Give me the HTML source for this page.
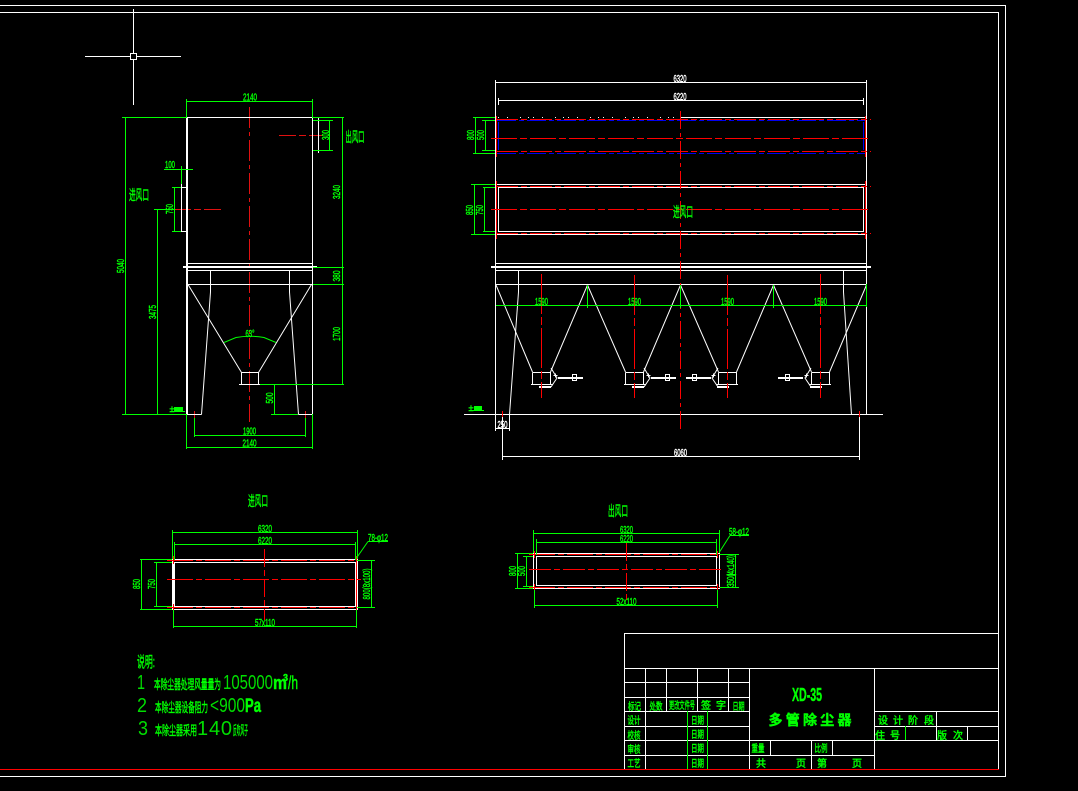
<!DOCTYPE html>
<html lang="zh">
<head>
<meta charset="utf-8">
<title>XD-35 多管除尘器</title>
<style>
html,body{margin:0;padding:0;background:#000;width:1078px;height:791px;overflow:hidden}
svg{display:block}
text{font-family:"Liberation Sans","Noto Sans CJK SC",sans-serif;fill:#0f0;text-anchor:middle;stroke:#0f0;stroke-width:.45}
.w{fill:#fff;stroke:#fff}
.c{font-weight:700}
.s{text-anchor:start}
.t{stroke-width:0;fill:#0d0;text-anchor:start}
</style>
</head>
<body>
<svg width="1078" height="791" viewBox="0 0 1078 791" xmlns="http://www.w3.org/2000/svg">
<rect width="1078" height="791" fill="#000"/>

<!-- frame -->
<g fill="none" stroke="#fff" stroke-width="1" shape-rendering="crispEdges">
<path d="M0 5.5H1005.5V776.5H0M0 12.5H998.5V769.5"/>
<!-- crosshair -->
<path d="M133.5 9V53M133.5 60V105M85 56.5H130M137 56.5H181M130.5 53.5h6v6h-6z"/>
</g>
<path d="M0 769.5H999" stroke="#f00" stroke-width="1" shape-rendering="crispEdges" fill="none"/>

<!-- LEFT VIEW: red -->
<g fill="none" stroke="#e01010" stroke-width="1" shape-rendering="crispEdges">
<path d="M249.5 107V422" stroke-dasharray="21 4 4 4"/>
<path d="M279 135.5H323" stroke-dasharray="17 3 7 3"/>
<path d="M174 209.5H221" stroke-dasharray="17 3 7 3"/>
<path d="M194.5 411V418M305.5 411V418"/>
</g>
<!-- LEFT VIEW: white -->
<g fill="none" stroke="#fff" stroke-width="1">
<g shape-rendering="crispEdges">
<path d="M186.5 117.5H312.5V414.5H298.5M187.5 117.5V414.5H201.5M186.5 117.5V414.5"/>
<path d="M312.5 120.5H318.5M312.5 150.5H318.5M318.5 118V153"/>
<path d="M181.5 184V232M181.5 187.5H187M181.5 231.5H187"/>
<path d="M187 263.5H313M183 266.5H317M183 267.5H317M187 270.5H313M187 284.5H312"/>
<path d="M241.5 372.5H258.5V384.5M241.5 372.5V384.5M239 384.5H260"/>
</g>
<path d="M210.5 270V292L201.5 414.5M289.5 270V292L298.5 414.5"/>
<path d="M188 284.5L241.5 372.5M311.5 284.5L258.5 372.5"/>
</g>
<!-- LEFT VIEW: green -->
<g fill="none" stroke="#0f0" stroke-width="1">
<g shape-rendering="crispEdges">
<path d="M186.5 99V117M312.5 99V117M187 101.5H312"/>
<path d="M122 117.5H187M312 117.5H344M125.5 117V414M342.5 117V384M313 120.5H333M313 150.5H333M329.5 121V150"/>
<path d="M164 169.5H193M181.5 166V184M172 187.5H181M174.5 188V231M172 231.5H181M154 209.5H174M157.5 209V414"/>
<path d="M122 414.5H187M260 384.5H344M274.5 384V414M271 414.5H298M313 267.5H344M313 284.5H344"/>
<path d="M194.5 418V437M305.5 418V437M195 435.5H305M186.5 414V449M312.5 414V449M187 447.5H312"/>
</g>
<path d="M224 342.5L236 337.5Q250 335 264 337.5L276 342.5"/>
</g>
<rect x="174" y="407" width="9" height="4" fill="#0f0"/>
<rect x="170" y="411" width="15" height="1" fill="#0f0"/>

<!-- FRONT VIEW: blue -->
<g fill="none" stroke="#0000ee" stroke-width="1" shape-rendering="crispEdges">
<path d="M497 120.5H866M497 153.5H866" stroke-dasharray="19 3 5 3"/>
<path d="M498.5 122V150M863.5 122V150"/>
</g>
<!-- FRONT VIEW: white -->
<g fill="none" stroke="#fff" stroke-width="1">
<g shape-rendering="crispEdges">
<path d="M495.5 80V431M866.5 80V414.5M495 82.5H867M498.5 98V105M863.5 98V105M498 100.5H864"/>
<path d="M498 117.5H680" stroke-dasharray="1 8 1 12 1 7 1 4"/>
<path d="M680 117.5H866"/>
<path d="M496 184.5H866M496 234.5H866M498.5 187.5H863.5V231.5H498.5ZM496.5 184V235"/>
<path d="M496 263.5H866M491 266.5H871M491 267.5H871M496 270.5H866M495 284.5H867"/>
<path d="M464 414.5H883M502.5 417V460M859.5 417V460M503 456.5H859M496 428.5H509M509.5 414V431"/>
<path d="M532.5 372.5H550.5V384.5M532.5 372.5V384.5M531 384.5H553M539 386.5H551M539 387.5H551"/>
<path d="M625.5 372.5H643.5V384.5M625.5 372.5V384.5M624 384.5H646M632 386.5H644M632 387.5H644"/>
<path d="M718.5 372.5H736.5V384.5M718.5 372.5V384.5M716 384.5H738M717 386.5H729M717 387.5H729"/>
<path d="M811.5 372.5H829.5V384.5M811.5 372.5V384.5M809 384.5H831M810 386.5H822M810 387.5H822"/>
<path d="M558 378H583M651 378H676M686 378H711M778 378H803" stroke-width="2"/>
<path d="M572.5 374.5h4v6h-4zM665.5 374.5h4v6h-4zM692.5 374.5h4v6h-4zM785.5 374.5h4v6h-4z"/>
<path d="M555.5 373.5v4M553.5 375.5h4M648.5 373.5v4M646.5 375.5h4M713.5 373.5v4M711.5 375.5h4M806.5 373.5v4M804.5 375.5h4"/>
</g>
<path d="M496 285L532.5 372M550.5 372L587.5 285L625.5 372M643.5 372L680.5 285L718.5 372M736.5 372L773.5 285L811.5 372M829.5 372L866.5 285"/>
<path d="M518.5 270V292L509.5 414.5M843.5 270V292L851.5 414.5"/>
<path d="M551 368L557 378L551 387M644 368L650 378L644 387M718 368L712 378L718 387M811 368L805 378L811 387"/>
</g>
<!-- FRONT VIEW: red -->
<g fill="none" stroke="#f00" stroke-width="1" shape-rendering="crispEdges">
<path d="M496 119.5H871M496 151.5H871M496 186.5H871M496 233.5H871" stroke-dasharray="22 3 6 3"/>
<path d="M491 138.5H871" stroke-dasharray="26 3 7 3"/>
<path d="M491 209.5H871" stroke-dasharray="26 3 7 3"/>
<path d="M496.5 116V157M865.5 116V157M865.5 181V239M496.5 181V239"/>
<path d="M680.5 111V432" stroke-dasharray="18 4 4 4"/>
<path d="M541.5 274V398M634.5 275V398M727.5 275V398M820.5 274V398" stroke-dasharray="40 3 8 3"/>
<path d="M502.5 411V417M859.5 411V417"/>
</g>
<!-- FRONT VIEW: green -->
<g fill="none" stroke="#0f0" stroke-width="1" shape-rendering="crispEdges">
<path d="M473 117.5H495M473 153.5H495M475.5 118V153M482 120.5H495M482 150.5H495M485.5 121V150"/>
<path d="M471 184.5H495M471 234.5H495M474.5 185V234M483 187.5H495M483 231.5H495M484.5 188V231"/>
<path d="M496 305.5H867M587.5 285V308M680.5 285V308M773.5 285V308M866.5 284V307"/>
</g>
<rect x="474" y="406" width="8" height="4" fill="#0f0"/>
<rect x="469" y="410" width="15" height="1" fill="#0f0"/>

<!-- INLET DETAIL -->
<g fill="none" stroke="#fff" stroke-width="1" shape-rendering="crispEdges">
<path d="M172.5 559.5H357.5V609.5H172.5ZM174.5 562.5H355.5V606.5H174.5ZM173.5 560V609"/>
</g>
<g fill="none" stroke="#f00" stroke-width="1" shape-rendering="crispEdges">
<path d="M167 560.5H361M167 607.5H361" stroke-dasharray="26 3 6 3"/>
<path d="M167 579.5H361" stroke-dasharray="26 3 6 3"/>
<path d="M264.5 549V620" stroke-dasharray="18 3 6 3"/>
<path d="M173.5 556V564M173.5 604V612M356.5 556V612"/>
</g>
<g fill="none" stroke="#0f0" stroke-width="1">
<g shape-rendering="crispEdges">
<path d="M172.5 530V559M357.5 530V559M172 532.5H357M174.5 542V560M355.5 542V560M175 544.5H355"/>
<path d="M140 559.5H172M140 609.5H172M141.5 560V609M154 562.5H172M154 606.5H172M156.5 563V606"/>
<path d="M357 560.5H375M357 607.5H375M371.5 561V607"/>
<path d="M173.5 610V628M356.5 610V628M174 626.5H356M368 541.5H388"/>
</g>
<path d="M356.5 558L368 541.5"/>
</g>

<!-- OUTLET DETAIL -->
<g fill="none" stroke="#fff" stroke-width="1" shape-rendering="crispEdges">
<path d="M533.5 553.5H719.5V588.5H533.5ZM536.5 556.5H716.5V585.5H536.5Z"/>
</g>
<g fill="none" stroke="#f00" stroke-width="1" shape-rendering="crispEdges">
<path d="M529 554.5H724M529 587.5H724" stroke-dasharray="26 3 6 3"/>
<path d="M529 569.5H724" stroke-dasharray="22 3 6 3"/>
<path d="M626.5 543V600" stroke-dasharray="18 3 6 3"/>
<path d="M534.5 551V558M717.5 551V558M534.5 584V590M717.5 584V590"/>
</g>
<g fill="none" stroke="#0f0" stroke-width="1">
<g shape-rendering="crispEdges">
<path d="M533.5 530V553M719.5 530V553M534 533.5H719M536.5 539V555M716.5 539V555M537 542.5H716"/>
<path d="M515 553.5H533M515 588.5H533M517.5 554V588M523 556.5H533M523 586.5H533M526.5 557V586"/>
<path d="M720 554.5H739M720 587.5H739M735.5 555V587M727 574.5H736"/>
<path d="M534.5 590V608M717.5 590V608M535 605.5H717M730 535.5H749"/>
</g>
<path d="M719.5 552L730 535.5"/>
</g>

<!-- TITLE BLOCK -->
<g fill="none" stroke="#fff" stroke-width="1" shape-rendering="crispEdges">
<path d="M624.5 769V633.5H998.5M624.5 668.5H998.5"/>
<path d="M624 682.5H749M624 697.5H749M624 711.5H749M624 726.5H749M624 740.5H998M624 755.5H874"/>
<path d="M645.5 668V769M666.5 668V711M697.5 668V711M728.5 668V711M749.5 668V769"/>
<path d="M770.5 740V755M811.5 740V769M832.5 740V755M874.5 668V769"/>
<path d="M874 711.5H998M874 726.5H998M936.5 711V740M967.5 726V740"/>
</g>
<g fill="none" stroke="#0f0" stroke-width="1" shape-rendering="crispEdges">
<path d="M687.5 711V769M707.5 711V769M905.5 726V740"/>
</g>

<!-- DIMENSION TEXT: left view -->
<text x="250" y="100.5" font-size="10" textLength="14" lengthAdjust="spacingAndGlyphs">2140</text>
<text font-size="10" textLength="10" lengthAdjust="spacingAndGlyphs" x="170" y="168">100</text>
<text transform="translate(330,135) rotate(-90)" font-size="10" textLength="10" lengthAdjust="spacingAndGlyphs" y="-1">300</text>
<text x="355" y="142" font-size="14" textLength="19" lengthAdjust="spacingAndGlyphs">出风口</text>
<text x="139" y="200" font-size="14" textLength="20" lengthAdjust="spacingAndGlyphs">进风口</text>
<text transform="translate(174,209) rotate(-90)" font-size="10" textLength="10" lengthAdjust="spacingAndGlyphs" y="-1">750</text>
<text transform="translate(341,192) rotate(-90)" font-size="10" textLength="14" lengthAdjust="spacingAndGlyphs" y="-1">3240</text>
<text transform="translate(125,266) rotate(-90)" font-size="10" textLength="14" lengthAdjust="spacingAndGlyphs" y="-1">5040</text>
<text transform="translate(157,312) rotate(-90)" font-size="10" textLength="14" lengthAdjust="spacingAndGlyphs" y="-1">3475</text>
<text transform="translate(341,276) rotate(-90)" font-size="10" textLength="11" lengthAdjust="spacingAndGlyphs" y="-1">380</text>
<text transform="translate(341,334) rotate(-90)" font-size="10" textLength="14" lengthAdjust="spacingAndGlyphs" y="-1">1700</text>
<text transform="translate(274,398) rotate(-90)" font-size="10" textLength="11" lengthAdjust="spacingAndGlyphs" y="-1">500</text>
<text x="250" y="337" font-size="10" textLength="9" lengthAdjust="spacingAndGlyphs">63°</text>
<text x="249.5" y="434.5" font-size="10" textLength="13" lengthAdjust="spacingAndGlyphs">1900</text>
<text x="249.5" y="446.5" font-size="10" textLength="14" lengthAdjust="spacingAndGlyphs">2140</text>
<text x="172" y="412" font-size="9" textLength="5" lengthAdjust="spacingAndGlyphs">±</text>

<!-- DIMENSION TEXT: front view -->
<text class="w" x="680" y="82" font-size="10" textLength="13" lengthAdjust="spacingAndGlyphs">6320</text>
<text class="w" x="680" y="100" font-size="10" textLength="13" lengthAdjust="spacingAndGlyphs">6220</text>
<text transform="translate(475,135) rotate(-90)" font-size="10" textLength="10" lengthAdjust="spacingAndGlyphs" y="-1">800</text>
<text transform="translate(485,135) rotate(-90)" font-size="10" textLength="10" lengthAdjust="spacingAndGlyphs" y="-1">500</text>
<text transform="translate(474,210) rotate(-90)" font-size="10" textLength="10" lengthAdjust="spacingAndGlyphs" y="-1">850</text>
<text transform="translate(484,210) rotate(-90)" font-size="10" textLength="10" lengthAdjust="spacingAndGlyphs" y="-1">750</text>
<text x="683" y="217" font-size="14" textLength="20" lengthAdjust="spacingAndGlyphs">进风口</text>
<text x="541.5" y="305" font-size="10" textLength="13" lengthAdjust="spacingAndGlyphs">1590</text>
<text x="634.5" y="305" font-size="10" textLength="13" lengthAdjust="spacingAndGlyphs">1590</text>
<text x="727.5" y="305" font-size="10" textLength="13" lengthAdjust="spacingAndGlyphs">1590</text>
<text x="820.5" y="305" font-size="10" textLength="13" lengthAdjust="spacingAndGlyphs">1590</text>
<text class="w" x="502.5" y="428" font-size="10" textLength="10" lengthAdjust="spacingAndGlyphs">250</text>
<text class="w" x="680.5" y="456" font-size="10" textLength="13" lengthAdjust="spacingAndGlyphs">6060</text>
<text x="471" y="411" font-size="9" textLength="5" lengthAdjust="spacingAndGlyphs">±</text>

<!-- DETAIL TEXT -->
<text x="258" y="506" font-size="14" textLength="20" lengthAdjust="spacingAndGlyphs">进风口</text>
<text x="265" y="532" font-size="10" textLength="14" lengthAdjust="spacingAndGlyphs">6320</text>
<text x="265" y="544" font-size="10" textLength="14" lengthAdjust="spacingAndGlyphs">6220</text>
<text transform="translate(141,584) rotate(-90)" font-size="10" textLength="10" lengthAdjust="spacingAndGlyphs" y="-1">850</text>
<text transform="translate(156,584) rotate(-90)" font-size="10" textLength="10" lengthAdjust="spacingAndGlyphs" y="-1">750</text>
<text transform="translate(371,584) rotate(-90)" font-size="10" textLength="31" lengthAdjust="spacingAndGlyphs" y="-1">800(8x100)</text>
<text x="265" y="626" font-size="10" textLength="20" lengthAdjust="spacingAndGlyphs">57x110</text>
<text x="378" y="541" font-size="10" textLength="20" lengthAdjust="spacingAndGlyphs">78-φ12</text>

<text x="618" y="516" font-size="14" textLength="20" lengthAdjust="spacingAndGlyphs">出风口</text>
<text x="626.5" y="533" font-size="10" textLength="13" lengthAdjust="spacingAndGlyphs">6320</text>
<text x="626.5" y="542" font-size="10" textLength="13" lengthAdjust="spacingAndGlyphs">6220</text>
<text transform="translate(517,571) rotate(-90)" font-size="10" textLength="10" lengthAdjust="spacingAndGlyphs" y="-1">800</text>
<text transform="translate(526,571) rotate(-90)" font-size="10" textLength="10" lengthAdjust="spacingAndGlyphs" y="-1">500</text>
<text transform="translate(735,571) rotate(-90)" font-size="10" textLength="32" lengthAdjust="spacingAndGlyphs" y="-1">350(4x140)</text>
<text x="626.5" y="605" font-size="10" textLength="20" lengthAdjust="spacingAndGlyphs">52x110</text>
<text x="739" y="535" font-size="10" textLength="20" lengthAdjust="spacingAndGlyphs">58-φ12</text>

<!-- NOTES -->
<text x="146" y="667" font-size="15" textLength="18" lengthAdjust="spacingAndGlyphs">说明:</text>
<text class="t" x="137" y="689" font-size="20" textLength="8" lengthAdjust="spacingAndGlyphs">1</text>
<text class="t" x="137" y="712" font-size="20" textLength="10" lengthAdjust="spacingAndGlyphs">2</text>
<text class="t" x="138" y="735" font-size="20" textLength="10" lengthAdjust="spacingAndGlyphs">3</text>

<text class="s" x="154" y="689" font-size="13" textLength="67" lengthAdjust="spacingAndGlyphs">本除尘器处理风量量为</text>
<text class="t" x="223" y="689" font-size="20" textLength="50" lengthAdjust="spacingAndGlyphs">105000</text>
<text class="c s" x="273" y="689" font-size="18" textLength="14" lengthAdjust="spacingAndGlyphs">m</text>
<text class="c s" x="283" y="681" font-size="10" textLength="5" lengthAdjust="spacingAndGlyphs">3</text>
<text class="s" x="288" y="689" font-size="18" textLength="10" lengthAdjust="spacingAndGlyphs">/h</text>

<text class="s" x="155" y="712" font-size="13" textLength="53" lengthAdjust="spacingAndGlyphs">本除尘器设备阻力</text>
<text class="t" x="210" y="712" font-size="20" textLength="35" lengthAdjust="spacingAndGlyphs">&lt;900</text>
<text class="c s" x="245" y="712" font-size="19" textLength="16" lengthAdjust="spacingAndGlyphs">Pa</text>

<text class="s" x="155" y="735" font-size="13" textLength="42" lengthAdjust="spacingAndGlyphs">本除尘器采用</text>
<text class="t" x="197" y="735" font-size="20" textLength="35">140</text>
<text class="s" x="233" y="735" font-size="13" textLength="15" lengthAdjust="spacingAndGlyphs">反吹风子</text>

<!-- TITLE BLOCK TEXT -->
<text x="634.5" y="710" font-size="10" textLength="13" lengthAdjust="spacingAndGlyphs">标记</text>
<text x="656" y="710" font-size="10" textLength="13" lengthAdjust="spacingAndGlyphs">处数</text>
<text x="682" y="709" font-size="10" textLength="26" lengthAdjust="spacingAndGlyphs">更改文件号</text>
<text x="706" y="709" font-size="10">签</text>
<text x="721" y="709" font-size="10">字</text>
<text x="738.5" y="710" font-size="10" textLength="12" lengthAdjust="spacingAndGlyphs">日期</text>
<text x="634" y="724" font-size="10" textLength="13" lengthAdjust="spacingAndGlyphs">设计</text>
<text x="634" y="739" font-size="10" textLength="13" lengthAdjust="spacingAndGlyphs">校核</text>
<text x="634" y="753" font-size="10" textLength="13" lengthAdjust="spacingAndGlyphs">审核</text>
<text x="634" y="767" font-size="10" textLength="13" lengthAdjust="spacingAndGlyphs">工艺</text>
<text x="697.5" y="724" font-size="10" textLength="13" lengthAdjust="spacingAndGlyphs">日期</text>
<text x="697.5" y="738" font-size="10" textLength="13" lengthAdjust="spacingAndGlyphs">日期</text>
<text x="697.5" y="752" font-size="10" textLength="13" lengthAdjust="spacingAndGlyphs">日期</text>
<text x="697.5" y="767" font-size="10" textLength="13" lengthAdjust="spacingAndGlyphs">日期</text>
<text class="c" x="807" y="701" font-size="18" textLength="30" lengthAdjust="spacingAndGlyphs">XD-35</text>
<text class="c" x="810" y="725" font-size="14" textLength="83">多管除尘器</text>
<text x="758" y="752" font-size="10" textLength="13" lengthAdjust="spacingAndGlyphs">重量</text>
<text x="821" y="752" font-size="10" textLength="13" lengthAdjust="spacingAndGlyphs">比例</text>
<text x="761" y="767" font-size="10">共</text>
<text x="801" y="767" font-size="10">页</text>
<text x="822" y="767" font-size="10">第</text>
<text x="857" y="767" font-size="10">页</text>
<text x="883" y="724" font-size="10">设</text>
<text x="898" y="724" font-size="10">计</text>
<text x="913" y="724" font-size="10">阶</text>
<text x="929" y="724" font-size="10">段</text>
<text x="880" y="739" font-size="10">住</text>
<text x="895" y="739" font-size="10">号</text>
<text x="942" y="739" font-size="10">版</text>
<text x="958" y="739" font-size="10">次</text>
</svg>
</body>
</html>
